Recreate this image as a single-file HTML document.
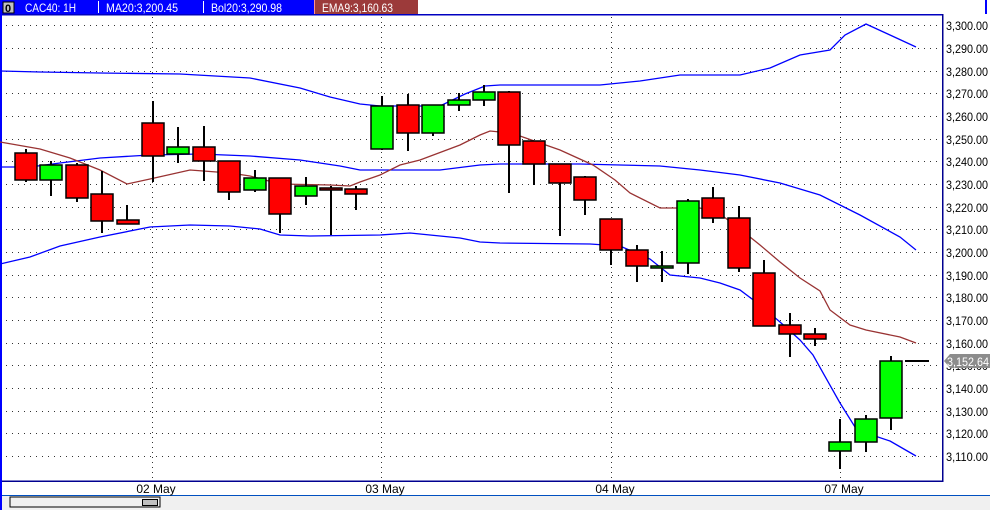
<!DOCTYPE html>
<html><head><meta charset="utf-8"><style>
html,body{margin:0;padding:0;background:#fff;width:990px;height:510px;overflow:hidden}
svg{display:block}
text{font-family:"Liberation Sans",sans-serif}
</style></head><body>
<svg width="990" height="510" viewBox="0 0 990 510" xmlns="http://www.w3.org/2000/svg">
<rect width="990" height="510" fill="#fff"/>
<!-- frame -->
<rect x="0" y="0" width="2" height="496" fill="#0000ff"/>
<rect x="985" y="0" width="2" height="14" fill="#0000ff"/>
<rect x="0" y="495" width="990" height="15" fill="#f0f0f0"/>
<rect x="0" y="495" width="990" height="1" fill="#0050c0"/>
<rect x="0" y="495" width="2" height="15" fill="#0000ff"/>
<rect x="10" y="497" width="150" height="10" fill="#f0f0f0" stroke="#000" stroke-width="1"/>
<rect x="142.5" y="499.5" width="15" height="6" fill="#c0c0c0" stroke="#000" stroke-width="1"/>
<!-- plot border -->
<rect x="2" y="14" width="941" height="1.5" fill="#0000c0"/>
<rect x="942" y="14" width="1.5" height="468" fill="#000090"/>
<rect x="2" y="480.5" width="941" height="1.5" fill="#000090"/>
<!-- horizontal grid -->
<g stroke="#333" stroke-width="1" stroke-dasharray="1 5">
<line x1="6" x2="940" y1="25.5" y2="25.5"/>
<line x1="6" x2="940" y1="48.5" y2="48.5"/>
<line x1="6" x2="940" y1="71.5" y2="71.5"/>
<line x1="6" x2="940" y1="93.5" y2="93.5"/>
<line x1="6" x2="940" y1="116.5" y2="116.5"/>
<line x1="6" x2="940" y1="139.5" y2="139.5"/>
<line x1="6" x2="940" y1="161.5" y2="161.5"/>
<line x1="6" x2="940" y1="184.5" y2="184.5"/>
<line x1="6" x2="940" y1="207.5" y2="207.5"/>
<line x1="6" x2="940" y1="229.5" y2="229.5"/>
<line x1="6" x2="940" y1="252.5" y2="252.5"/>
<line x1="6" x2="940" y1="275.5" y2="275.5"/>
<line x1="6" x2="940" y1="297.5" y2="297.5"/>
<line x1="6" x2="940" y1="320.5" y2="320.5"/>
<line x1="6" x2="940" y1="343.5" y2="343.5"/>
<line x1="6" x2="940" y1="365.5" y2="365.5"/>
<line x1="6" x2="940" y1="388.5" y2="388.5"/>
<line x1="6" x2="940" y1="411.5" y2="411.5"/>
<line x1="6" x2="940" y1="433.5" y2="433.5"/>
<line x1="6" x2="940" y1="456.5" y2="456.5"/>
</g>
<g stroke="#333" stroke-width="1" stroke-dasharray="1 4">
<line x1="152.5" x2="152.5" y1="17" y2="480"/>
<line x1="381.5" x2="381.5" y1="17" y2="480"/>
<line x1="611.5" x2="611.5" y1="17" y2="480"/>
<line x1="840.5" x2="840.5" y1="17" y2="480"/>
</g>
<!-- axis labels -->
<g font-size="12" fill="#000">
<text x="946" y="30" textLength="42" lengthAdjust="spacingAndGlyphs">3,300.00</text>
<text x="946" y="53" textLength="42" lengthAdjust="spacingAndGlyphs">3,290.00</text>
<text x="946" y="76" textLength="42" lengthAdjust="spacingAndGlyphs">3,280.00</text>
<text x="946" y="98" textLength="42" lengthAdjust="spacingAndGlyphs">3,270.00</text>
<text x="946" y="121" textLength="42" lengthAdjust="spacingAndGlyphs">3,260.00</text>
<text x="946" y="144" textLength="42" lengthAdjust="spacingAndGlyphs">3,250.00</text>
<text x="946" y="166" textLength="42" lengthAdjust="spacingAndGlyphs">3,240.00</text>
<text x="946" y="189" textLength="42" lengthAdjust="spacingAndGlyphs">3,230.00</text>
<text x="946" y="212" textLength="42" lengthAdjust="spacingAndGlyphs">3,220.00</text>
<text x="946" y="234" textLength="42" lengthAdjust="spacingAndGlyphs">3,210.00</text>
<text x="946" y="257" textLength="42" lengthAdjust="spacingAndGlyphs">3,200.00</text>
<text x="946" y="280" textLength="42" lengthAdjust="spacingAndGlyphs">3,190.00</text>
<text x="946" y="302" textLength="42" lengthAdjust="spacingAndGlyphs">3,180.00</text>
<text x="946" y="325" textLength="42" lengthAdjust="spacingAndGlyphs">3,170.00</text>
<text x="946" y="348" textLength="42" lengthAdjust="spacingAndGlyphs">3,160.00</text>
<text x="946" y="370" textLength="42" lengthAdjust="spacingAndGlyphs">3,150.00</text>
<text x="946" y="393" textLength="42" lengthAdjust="spacingAndGlyphs">3,140.00</text>
<text x="946" y="416" textLength="42" lengthAdjust="spacingAndGlyphs">3,130.00</text>
<text x="946" y="438" textLength="42" lengthAdjust="spacingAndGlyphs">3,120.00</text>
<text x="946" y="461" textLength="42" lengthAdjust="spacingAndGlyphs">3,110.00</text>
</g>
<polygon points="944,361 950,354 990,354 990,368 950,368" fill="#8c8c8c"/>
<text x="947" y="366" font-size="12" fill="#fff" textLength="42" lengthAdjust="spacingAndGlyphs">3,152.64</text>
<g font-size="12" fill="#000" text-anchor="middle">
<text x="156" y="493">02 May</text>
<text x="385" y="493">03 May</text>
<text x="615" y="493">04 May</text>
<text x="844" y="493">07 May</text>
</g>
<!-- bands -->
<g fill="none" stroke-width="1.3">
<polyline stroke="#0000ff" points="0,71 40,72 100,73 180,74 250,78 300,88 330,97 360,104 380,106 440,106 465,94 485,86 500,85 600,85 640,81 680,75 740,75 770,68 800,55 830,50 845,35 866,24 890,35 916,47"/>
<polyline stroke="#0000ff" points="0,167 30,167 60,163 100,158 150,155 200,154 250,156 300,160 340,166 360,170 440,170 480,165 500,164 580,164 620,165 660,166 700,170 740,175 780,183 820,195 860,215 900,237 916,250"/>
<polyline stroke="#0000ff" points="0,264 30,257 60,246 100,237 150,227 190,225 230,226 260,229 280,235 310,236 380,235 410,233 460,238 480,242 500,243 590,244 620,246 650,259 670,275 700,278 720,283 740,290 760,305 780,322 800,340 813,355 840,403 855,427 866,433 890,441 916,456"/>
<polyline stroke="#993333" points="0,142 40,149 70,158 100,170 127,184 150,179 190,170 230,173 250,176 280,184 330,185 350,186 360,182 380,175 400,165 420,160 460,145 480,135 490,131 500,132 520,136 560,150 593,165 615,180 630,193 660,208 700,208 720,214 740,229 760,245 780,262 800,278 820,291 830,310 850,325 866,330 900,337 916,343"/>
</g>
<!-- candles -->
<g stroke="#000" stroke-width="2">
<line x1="26" x2="26" y1="149" y2="182"/><line x1="51" x2="51" y1="161" y2="196"/><line x1="77" x2="77" y1="163" y2="202"/><line x1="102" x2="102" y1="171" y2="233"/><line x1="127" x2="127" y1="205" y2="224"/><line x1="153" x2="153" y1="101" y2="182"/><line x1="178" x2="178" y1="127" y2="163"/><line x1="204" x2="204" y1="126" y2="181"/><line x1="229" x2="229" y1="161" y2="200"/><line x1="255" x2="255" y1="170" y2="192"/><line x1="280" x2="280" y1="178" y2="233"/><line x1="306" x2="306" y1="177" y2="205"/><line x1="331" x2="331" y1="186" y2="235"/><line x1="356" x2="356" y1="186" y2="210"/>
<line x1="382" x2="382" y1="96" y2="150"/><line x1="408" x2="408" y1="94" y2="151"/><line x1="433" x2="433" y1="105" y2="136"/><line x1="459" x2="459" y1="93" y2="111"/><line x1="484" x2="484" y1="85" y2="106"/><line x1="509" x2="509" y1="91" y2="193"/><line x1="534" x2="534" y1="141" y2="185"/><line x1="560" x2="560" y1="164" y2="236"/><line x1="585" x2="585" y1="176" y2="215"/>
<line x1="611" x2="611" y1="219" y2="265"/><line x1="637" x2="637" y1="245" y2="282"/><line x1="662" x2="662" y1="251" y2="282"/><line x1="688" x2="688" y1="199" y2="274"/><line x1="713" x2="713" y1="187" y2="223"/><line x1="739" x2="739" y1="206" y2="272"/><line x1="764" x2="764" y1="260" y2="326"/><line x1="790" x2="790" y1="313" y2="357"/><line x1="815" x2="815" y1="328" y2="346"/>
<line x1="840" x2="840" y1="419" y2="469"/><line x1="866" x2="866" y1="415" y2="452"/><line x1="891" x2="891" y1="356" y2="430"/>
<line x1="905" x2="929" y1="361" y2="361"/>
</g>
<g stroke="#000" stroke-width="1.5">
<rect x="15" y="153" width="22" height="27" fill="#f00"/>
<rect x="40" y="165" width="22" height="15" fill="#0f0"/>
<rect x="66" y="165" width="22" height="33" fill="#f00"/>
<rect x="91" y="194" width="22" height="27" fill="#f00"/>
<rect x="117" y="220" width="22" height="4" fill="#f00"/>
<rect x="142" y="123" width="22" height="33" fill="#f00"/>
<rect x="167" y="147" width="22" height="7" fill="#0f0"/>
<rect x="193" y="147" width="22" height="14" fill="#f00"/>
<rect x="218" y="161" width="22" height="31" fill="#f00"/>
<rect x="244" y="178" width="22" height="12" fill="#0f0"/>
<rect x="269" y="178" width="22" height="36" fill="#f00"/>
<rect x="295" y="186" width="22" height="10" fill="#0f0"/>
<rect x="320" y="188" width="22" height="2" fill="#f00"/>
<rect x="345" y="189" width="22" height="5" fill="#f00"/>
<rect x="371" y="106" width="22" height="43" fill="#0f0"/>
<rect x="397" y="105" width="22" height="28" fill="#f00"/>
<rect x="422" y="105" width="22" height="28" fill="#0f0"/>
<rect x="448" y="100" width="22" height="5" fill="#0f0"/>
<rect x="473" y="92" width="22" height="8" fill="#0f0"/>
<rect x="498" y="92" width="22" height="53" fill="#f00"/>
<rect x="523" y="141" width="22" height="23" fill="#f00"/>
<rect x="549" y="164" width="22" height="19" fill="#f00"/>
<rect x="574" y="177" width="22" height="23" fill="#f00"/>
<rect x="600" y="219" width="22" height="31" fill="#f00"/>
<rect x="626" y="250" width="22" height="16" fill="#f00"/>
<rect x="651" y="266" width="22" height="2" fill="#0f0"/>
<rect x="677" y="201" width="22" height="62" fill="#0f0"/>
<rect x="702" y="198" width="22" height="20" fill="#f00"/>
<rect x="728" y="218" width="22" height="50" fill="#f00"/>
<rect x="753" y="273" width="22" height="53" fill="#f00"/>
<rect x="779" y="325" width="22" height="9" fill="#f00"/>
<rect x="804" y="334" width="22" height="5" fill="#f00"/>
<rect x="829" y="442" width="22" height="9" fill="#0f0"/>
<rect x="855" y="419" width="22" height="23" fill="#0f0"/>
<rect x="880" y="361" width="22" height="57" fill="#0f0"/>
</g>
<!-- top bar -->
<rect x="0" y="0" width="418" height="14" fill="#0000ff"/>
<rect x="314" y="0" width="104" height="14" fill="#9c3a3a"/>
<rect x="314" y="0" width="1" height="14" fill="#ff9090"/>
<rect x="3" y="2" width="11" height="11" fill="#c0c0c0" stroke="#000" stroke-width="1"/>
<text x="5" y="12" font-size="11" font-weight="bold" fill="#000">0</text>
<rect x="98" y="1" width="1" height="12" fill="#fff"/>
<rect x="203" y="1" width="1" height="12" fill="#fff"/>
<g font-size="12" fill="#fff">
<text x="25" y="12" textLength="51" lengthAdjust="spacingAndGlyphs">CAC40: 1H</text>
<text x="106" y="12" textLength="72" lengthAdjust="spacingAndGlyphs">MA20:3,200.45</text>
<text x="211" y="12" textLength="71" lengthAdjust="spacingAndGlyphs">Bol20:3,290.98</text>
<text x="322" y="12" textLength="71" lengthAdjust="spacingAndGlyphs">EMA9:3,160.63</text>
</g>
</svg>
</body></html>
